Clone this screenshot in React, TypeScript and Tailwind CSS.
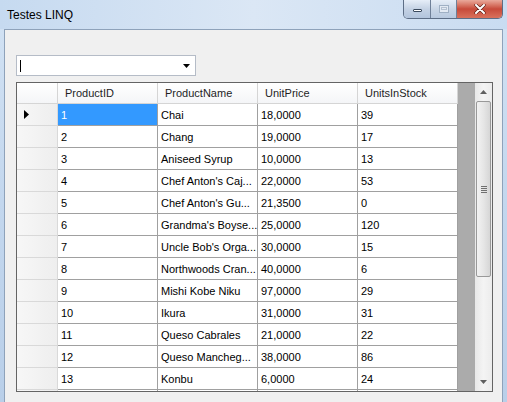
const rows: [string, string, string, string][] = [
  ['1', 'Chai', '18,0000', '39'],
  ['2', 'Chang', '19,0000', '17'],
  ['3', 'Aniseed Syrup', '10,0000', '13'],
  ['4', "Chef Anton's Caj...", '22,0000', '53'],
  ['5', "Chef Anton's Gu...", '21,3500', '0'],
  ['6', "Grandma's Boyse...", '25,0000', '120'],
  ['7', "Uncle Bob's Orga...", '30,0000', '15'],
  ['8', 'Northwoods Cran...', '40,0000', '6'],
  ['9', 'Mishi Kobe Niku', '97,0000', '29'],
  ['10', 'Ikura', '31,0000', '31'],
  ['11', 'Queso Cabrales', '21,0000', '22'],
  ['12', 'Queso Mancheg...', '38,0000', '86'],
  ['13', 'Konbu', '6,0000', '24'],
  ['', '', '', ''],
];

const columns = ['ProductID', 'ProductName', 'UnitPrice', 'UnitsInStock'];

function WindowButtons() {
  return (
    <div className="absolute right-[4px] top-0 flex h-[19px] overflow-hidden rounded-b-[5px] border border-t-0 border-[#5d6e86]">
      <div className="flex w-[27px] items-center justify-center border-r border-[#6f8098] bg-gradient-to-b from-[#e6eef8] via-[#c4d2e4] to-[#b2c4dc]">
        <div className="mt-[3px] h-[3px] w-[9px] rounded-[1px] border border-[#3a4a5e] bg-white" />
      </div>
      <div className="flex w-[26px] items-center justify-center border-r border-[#6f8098] bg-gradient-to-b from-[#e6eef8] via-[#c9d6e6] to-[#b8c9df]">
        <div className="h-[8px] w-[10px] border border-[#9fb0c4] bg-[#e3eaf3]">
          <div className="m-[1px] h-[3px] border border-[#b5c2d2]" />
        </div>
      </div>
      <div className="flex w-[45px] items-center justify-center bg-gradient-to-b from-[#e9a99b] via-[#c74a3a] to-[#d9715c]">
        <svg width="12" height="10" viewBox="0 0 12 10">
          <path d="M2 1 L10 9 M10 1 L2 9" stroke="#5a1a12" strokeWidth="3.2" strokeLinecap="round" />
          <path d="M2 1 L10 9 M10 1 L2 9" stroke="#ffffff" strokeWidth="2" strokeLinecap="round" />
        </svg>
      </div>
    </div>
  );
}

function ScrollBar() {
  return (
    <div className="flex h-full w-[17px] flex-col bg-gradient-to-r from-[#e8e8e8] via-[#f4f4f4] to-[#ececec]">
      <div className="flex h-[18px] items-center justify-center">
        <svg width="7" height="4" viewBox="0 0 7 4">
          <path d="M0 4 L3.5 0 L7 4 Z" fill="#606060" />
        </svg>
      </div>
      <div className="mx-[1px] flex h-[176px] items-center justify-center rounded-[2px] border border-[#999999] bg-gradient-to-r from-[#f2f2f2] via-[#e6e6e6] to-[#d6d6d6]">
        <div className="flex flex-col gap-[1px]">
          <div className="h-[1px] w-[6px] bg-[#707070]" />
          <div className="h-[1px] w-[6px] bg-[#707070]" />
          <div className="h-[1px] w-[6px] bg-[#707070]" />
          <div className="h-[1px] w-[6px] bg-[#707070]" />
        </div>
      </div>
      <div className="flex-1" />
      <div className="flex h-[18px] items-center justify-center">
        <svg width="7" height="4" viewBox="0 0 7 4">
          <path d="M0 0 L7 0 L3.5 4 Z" fill="#606060" />
        </svg>
      </div>
    </div>
  );
}

function DataGrid() {
  return (
    <div className="mt-[6px] flex h-[310px] w-[477px] border border-[#646464] bg-[#ababab]">
      <div className="flex h-full w-[441px] flex-col overflow-hidden">
        <div className="flex h-[21px] shrink-0 bg-gradient-to-b from-white to-[#f4f5f7]">
          <div className="w-[41px] border-r border-b border-[#d5d5d5]" />
          {columns.map((c) => (
            <div key={c} className="flex w-[100px] items-center border-r border-b border-[#d5d5d5] pl-[7px] pt-[1px] text-[#1e1e1e]">
              {c}
            </div>
          ))}
        </div>
        {rows.map((r, i) => (
          <div key={i} className="flex h-[22px] shrink-0">
            <div className="flex w-[41px] items-center border-r border-b border-[#d9d9d9] bg-gradient-to-r from-[#f7f7f7] to-[#eeeeee] pl-[7px]">
              {i === 0 && (
                <svg width="5" height="9" viewBox="0 0 5 9">
                  <path d="M0 0 L5 4.5 L0 9 Z" fill="#000000" />
                </svg>
              )}
            </div>
            {r.map((v, j) => (
              <div
                key={j}
                className={
                  i === 0 && j === 0
                    ? 'flex w-[100px] items-center border-r border-b border-[#a0a0a0] bg-[#3399ff] pl-[3px] pt-[2px] text-white'
                    : 'flex w-[100px] items-center border-r border-b border-[#a0a0a0] bg-white pl-[3px] pt-[2px] text-black'
                }
              >
                <span className="whitespace-nowrap">{v}</span>
              </div>
            ))}
          </div>
        ))}
      </div>
      <div className="w-[17px]" />
      <ScrollBar />
    </div>
  );
}

export default function App() {
  return (
    <div
      className="relative h-[402px] w-[507px] overflow-hidden bg-gradient-to-b from-[#d3e3f4] via-[#c3d7ee] to-[#b9cfe9] text-[11px]"
      style={{ fontFamily: '"Liberation Sans", Arial, sans-serif' }}
    >
      {/* Title bar */}
      <div className="relative h-[29px] bg-gradient-to-r from-[#c6daf0] via-[#dbe7f5] to-[#c9dcf1]">
        <div className="absolute left-[7px] top-[6px] text-[12px] text-black">Testes LINQ</div>
        <WindowButtons />
      </div>

      {/* Client area */}
      <div className="ml-[4px] h-[373px] w-[499px] border border-b-0 border-[#8ea2ba] bg-[#f0f0f0] pl-[11px] pt-[25px]">
        <div className="flex h-[21px] w-[180px] items-center justify-between border border-[#b5bcc7] bg-white pl-[3px] pr-[5px]">
          <div className="h-[12px] w-[1px] bg-black" />
          <svg width="7" height="4" viewBox="0 0 7 4">
            <path d="M0 0 L7 0 L3.5 4 Z" fill="#000000" />
          </svg>
        </div>
        <DataGrid />
      </div>
    </div>
  );
}
